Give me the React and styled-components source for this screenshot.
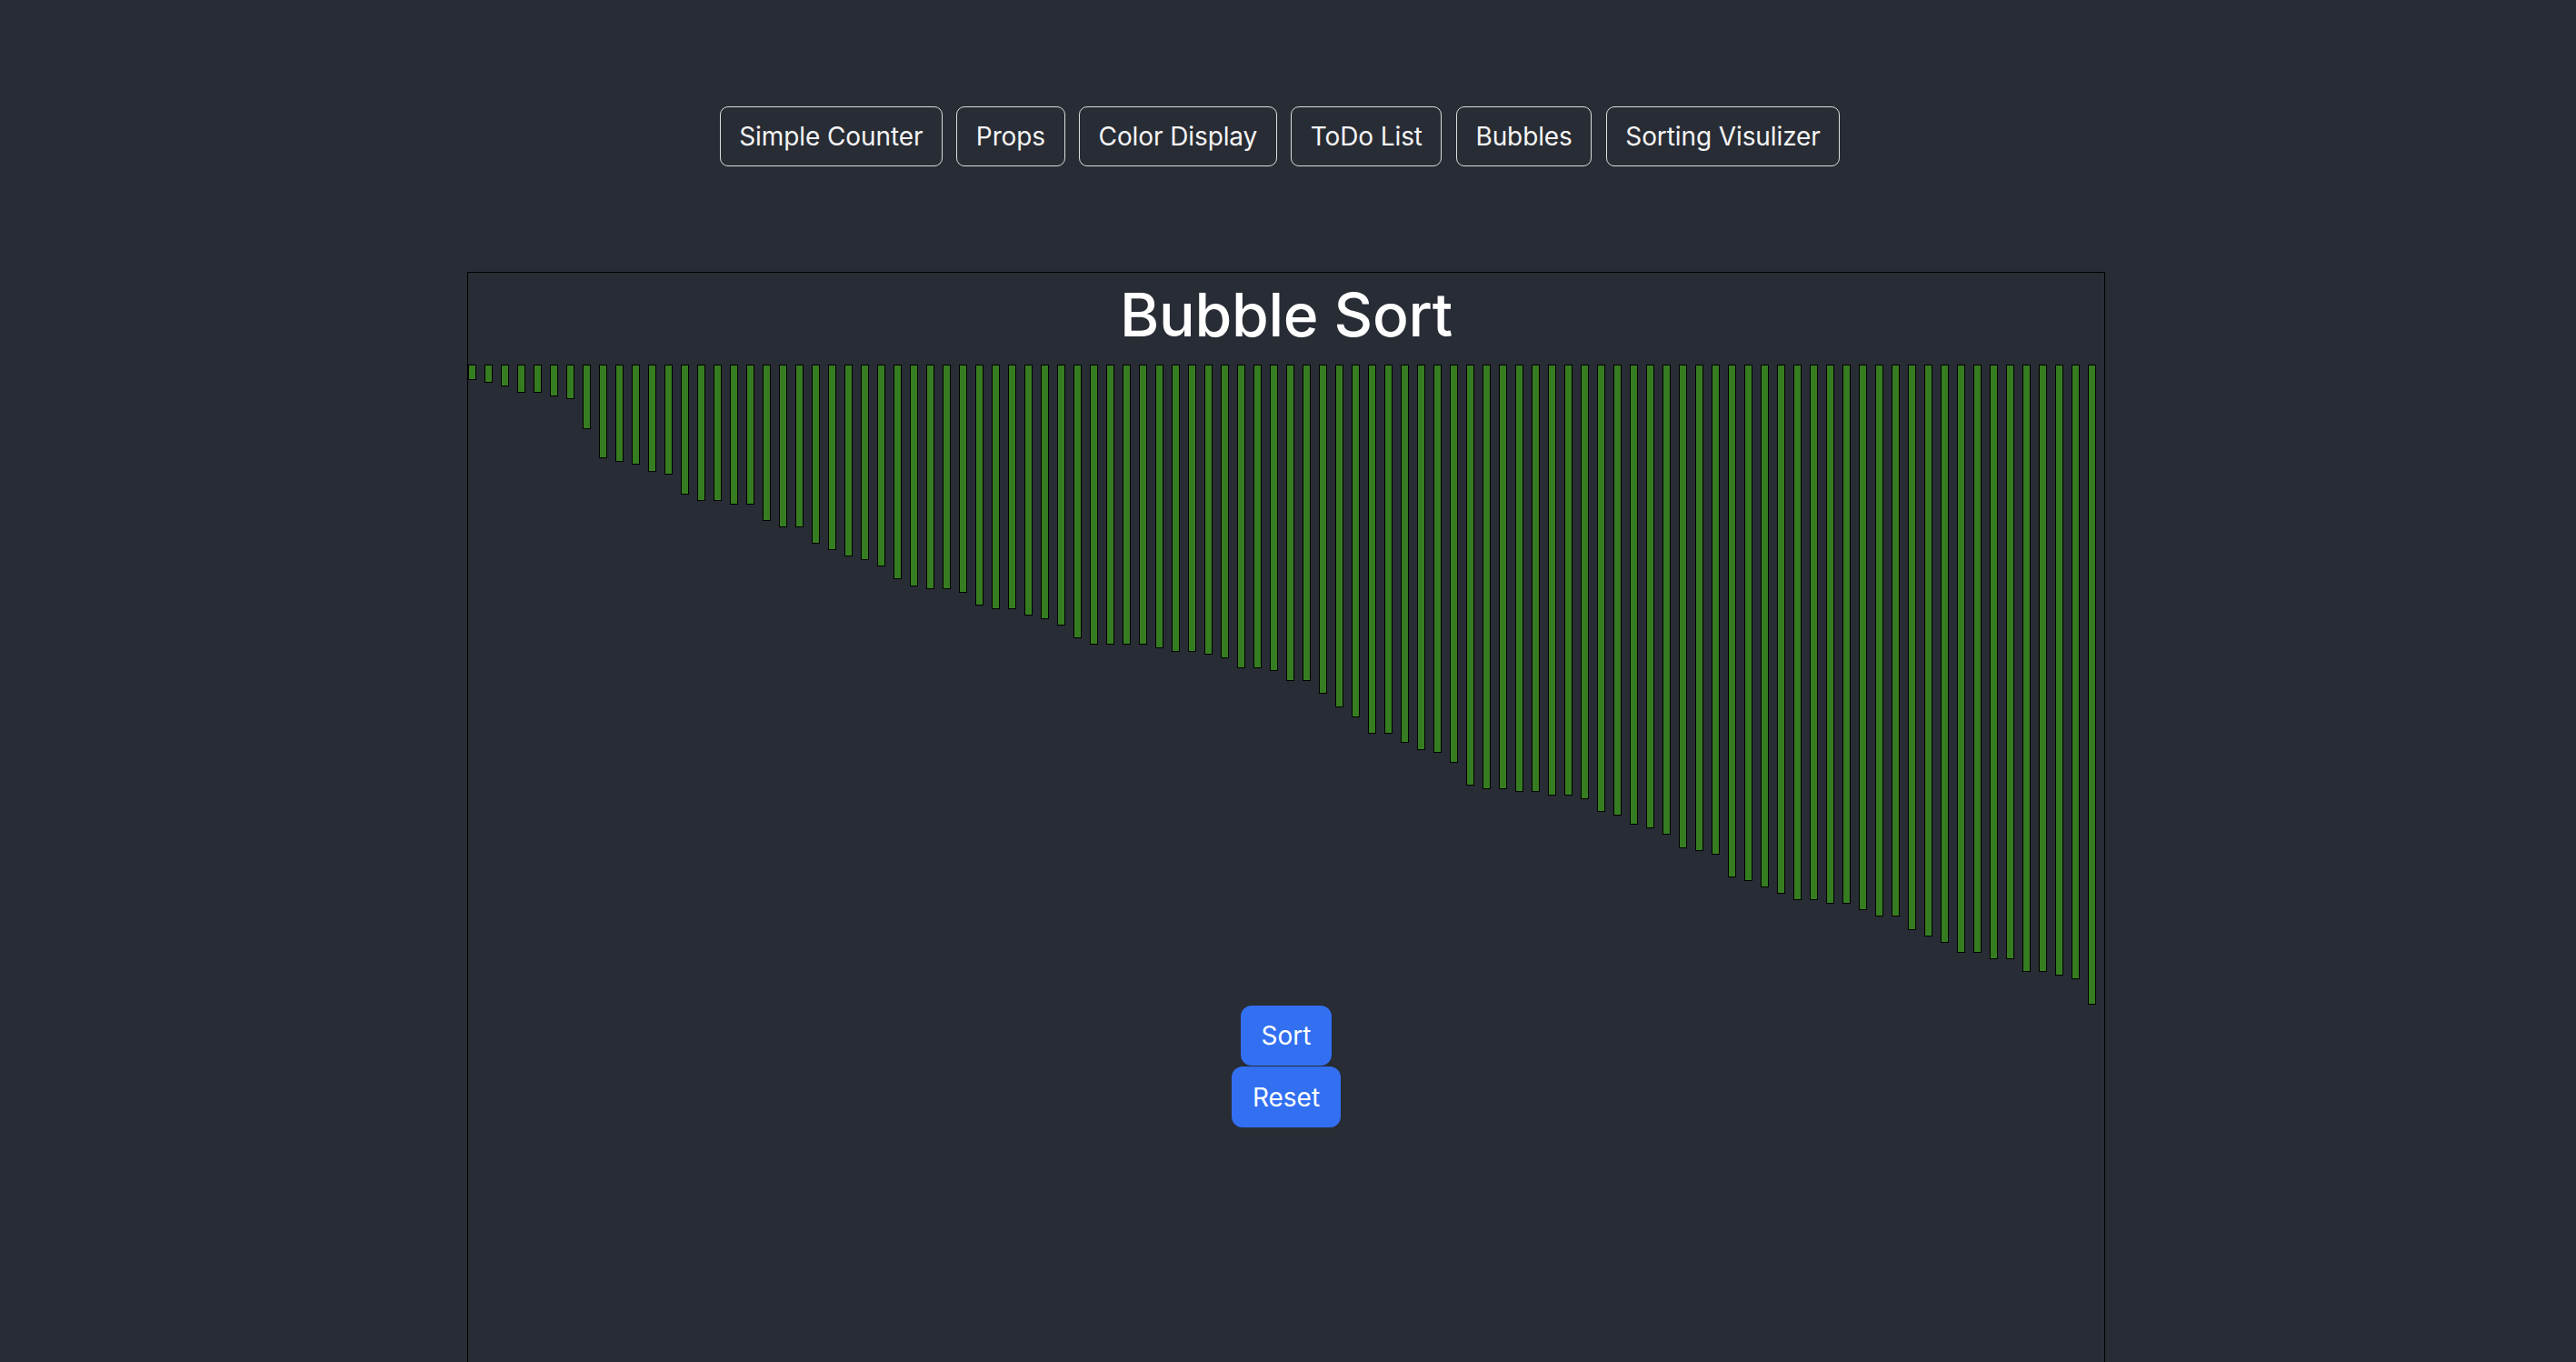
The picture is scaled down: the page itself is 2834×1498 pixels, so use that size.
import React from "react";
import styled, { createGlobalStyle } from "styled-components";

const heights = [
  17, 20, 24, 31, 31, 35, 38, 71, 103, 107, 110, 118, 121, 143, 150, 150, 154, 154, 172, 179,
  179, 197, 204, 211, 215, 222, 236, 244, 247, 247, 251, 265, 269, 269, 276, 280, 287, 301, 308, 308,
  308, 308, 312, 316, 316, 319, 323, 334, 334, 337, 348, 348, 362, 377, 388, 406, 406, 416, 424, 427,
  438, 463, 467, 467, 470, 470, 474, 474, 478, 492, 496, 506, 510, 517, 532, 535, 539, 564, 568, 575,
  582, 589, 589, 593, 593, 600, 607, 607, 622, 629, 636, 647, 647, 654, 654, 668, 668, 672, 676, 704,
];

const links = ["Simple Counter", "Props", "Color Display", "ToDo List", "Bubbles", "Sorting Visulizer"];

const GlobalStyle = createGlobalStyle`
  html, body {
    margin: 0;
    height: 100%;
    overflow: hidden;
    background: #282c34;
  }
  body {
    font-family: Inter, "Noto Sans", "Liberation Sans", sans-serif;
    color: #ffffff;
  }
`;

const Page = styled.div`
  display: flex;
  flex-direction: column;
  align-items: center;
`;

const Nav = styled.nav`
  display: flex;
  gap: 15.5px;
  padding: 117px 18px 0 0;
`;

const NavButton = styled.button`
  height: 66px;
  box-sizing: border-box;
  padding: 0 20.5px;
  background: transparent;
  border: 1px solid #dcdcdc;
  border-radius: 9px;
  color: #f4f4f4;
  font-family: inherit;
  font-size: 28px;
  letter-spacing: -0.1px;
  cursor: pointer;
`;

const Panel = styled.section`
  width: 1800px;
  height: 1300px;
  margin: 116px 4px 0 0;
  border: 1px solid #000;
`;

const Title = styled.h1`
  margin: 6px 0 15px;
  font-size: 66px;
  font-weight: 500;
  line-height: 80px;
  text-align: center;
  letter-spacing: -0.3px;
`;

const BarRow = styled.div`
  display: flex;
  align-items: flex-start;
`;

const Bar = styled.div`
  width: 9px;
  margin-right: 9px;
  box-sizing: border-box;
  border: 1px solid #000;
  background: #367d21;
  flex-shrink: 0;
`;

const Controls = styled.div`
  display: flex;
  flex-direction: column;
  align-items: center;
  gap: 1px;
  margin-top: 1px;
`;

const ActionButton = styled.button`
  height: ${(props) => (props.$tall ? "67px" : "66px")};
  box-sizing: border-box;
  padding: 0 23px;
  background: #3270f1;
  border: none;
  border-radius: 12px;
  color: #ffffff;
  font-family: inherit;
  font-size: 28px;
  cursor: pointer;
`;

const App = () => {
  return (
    <Page>
      <GlobalStyle />
      <Nav>
        {links.map((label) => (
          <NavButton key={label}>{label}</NavButton>
        ))}
      </Nav>
      <Panel>
        <Title>Bubble Sort</Title>
        <BarRow>
          {heights.map((h, i) => (
            <Bar key={i} style={{ height: h }} />
          ))}
        </BarRow>
        <Controls>
          <ActionButton>Sort</ActionButton>
          <ActionButton $tall>Reset</ActionButton>
        </Controls>
      </Panel>
    </Page>
  );
};

export default App;
